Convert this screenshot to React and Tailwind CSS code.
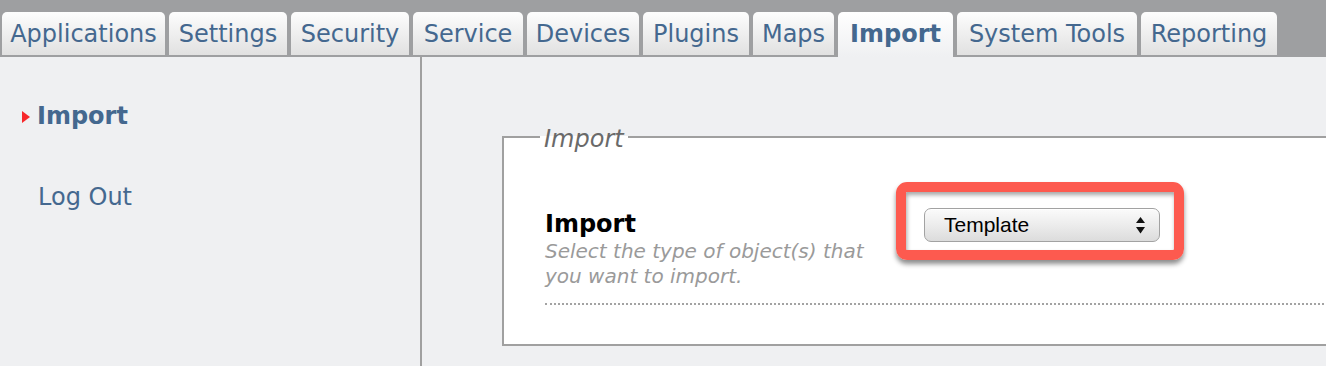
import React from "react";

const tabs = [
  { label: "Applications", w: "w-[163px]" },
  { label: "Settings", w: "w-[118px]" },
  { label: "Security", w: "w-[118px]" },
  { label: "Service", w: "w-[110px]" },
  { label: "Devices", w: "w-[112px]" },
  { label: "Plugins", w: "w-[106px]" },
  { label: "Maps", w: "w-[81px]" },
  { label: "Import", w: "w-[115px]", active: true },
  { label: "System Tools", w: "w-[180px]" },
  { label: "Reporting", w: "w-[136px]" },
];

const Tab = ({ label, w, active }) => (
  <div
    className={
      active
        ? `${w} h-[45px] shrink-0 flex justify-center pt-[8px] rounded-t-[5px] bg-gradient-to-b from-white to-[#eff0f2] font-bold text-[#44688f]`
        : `${w} h-[43px] mb-[2px] shrink-0 flex justify-center pt-[8px] rounded-t-[5px] bg-gradient-to-b from-[#fdfdfd] to-[#e1e1e1] text-[#44688f]`
    }
  >
    <span className="text-[24px] leading-[29px] whitespace-nowrap">{label}</span>
  </div>
);

const App = () => {
  return (
    <div
      className="w-[1326px] h-[366px] overflow-hidden bg-[#eff0f2] flex flex-col"
      style={{ fontFamily: '"DejaVu Sans", Verdana, sans-serif' }}
    >
      {/* tab bar */}
      <div className="h-[57px] shrink-0 bg-[#9e9fa1] flex items-end gap-[4px] pl-[2px]">
        {tabs.map((t) => (
          <Tab key={t.label} {...t} />
        ))}
      </div>

      <div className="flex flex-1 min-h-0">
        {/* sidebar */}
        <div className="w-[422px] shrink-0 border-r-2 border-[#a0a0a0] pt-[45px]">
          <div className="flex items-center pl-[22px]">
            <svg width="8" height="12" viewBox="0 0 8 12">
              <polygon points="0,0 8,6 0,12" fill="#f7272a" />
            </svg>
            <span className="ml-[7px] text-[24px] leading-[29px] font-bold text-[#44688f]">
              Import
            </span>
          </div>
          <div className="pl-[38px] mt-[52px] text-[24px] leading-[29px] text-[#44688f]">
            Log Out
          </div>
        </div>

        {/* main */}
        <div className="flex-1 overflow-hidden pl-[80px] pt-[64px]">
          <fieldset className="w-[900px] h-[225px] border-2 border-[#a0a0a0] bg-white">
            <legend className="ml-[36px] px-[4px] pt-[4px] italic text-[24px] leading-[28px] text-[#6a6a6a]">
              Import
            </legend>
            <div className="mt-[57px] ml-[41px] flex items-start border-b-2 border-dotted border-[#a3a3a3] pb-[14px]">
              <div className="w-[379px] shrink-0">
                <div className="text-[24px] leading-[29px] font-bold text-black">Import</div>
                <div className="w-[335px] italic text-[20px] leading-[25px] text-[#9a9a9a]">
                  Select the type of object(s) that you want to import.
                </div>
              </div>
              <div className="relative -mt-[2px]">
                <div
                  className="w-[236px] h-[34px] rounded-[7px] border border-[#a2a2a2] bg-gradient-to-b from-[#fbfbfb] via-[#ececec] to-[#dcdcdc] flex items-center justify-between pl-[19px] pr-[14px] shadow-[inset_0_1px_0_white]"
                  style={{ fontFamily: '"Liberation Sans", Arial, sans-serif' }}
                >
                  <span className="text-[21px] text-black">Template</span>
                  <svg width="9" height="17" viewBox="0 0 9 17">
                    <polygon points="4.5,0 9,6 0,6" fill="#111" />
                    <polygon points="0,10 9,10 4.5,16.5" fill="#111" />
                  </svg>
                </div>
                {/* annotation highlight */}
                <div className="absolute left-[-28px] top-[-26px] w-[288px] h-[78px] rounded-[11px] border-[10px] border-[#fd5a4f] pointer-events-none shadow-[0_4px_5px_rgba(0,0,0,0.45),inset_1px_3px_4px_rgba(0,0,0,0.35)]" />
              </div>
            </div>
          </fieldset>
        </div>
      </div>
    </div>
  );
};

export default App;
